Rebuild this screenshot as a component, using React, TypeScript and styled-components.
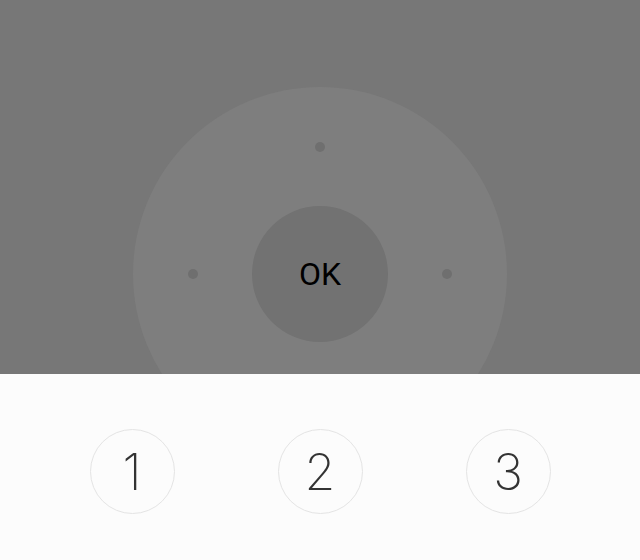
import { FC } from 'react';
import styled, { createGlobalStyle } from 'styled-components';

const GlobalStyle = createGlobalStyle`
  html, body {
    margin: 0;
    padding: 0;
    background: #fcfcfc;
  }
  * {
    box-sizing: border-box;
  }
`;

const Screen = styled.div`
  width: 640px;
  height: 560px;
  display: flex;
  flex-direction: column;
  overflow: hidden;
`;

const Pad = styled.div`
  height: 374px;
  flex: none;
  background: #777777;
  display: flex;
  justify-content: center;
  padding-top: 87px;
  overflow: hidden;
`;

const Wheel = styled.div`
  flex: none;
  width: 374px;
  height: 374px;
  border-radius: 50%;
  background: #7e7e7e;
  display: grid;
  grid-template-columns: 55px 10px 54px 136px 54px 10px 55px;
  grid-template-rows: 55px 10px 54px 136px 54px 10px 55px;
`;

const Dot = styled.span<{ $col: number; $row: number }>`
  grid-column: ${(p) => p.$col};
  grid-row: ${(p) => p.$row};
  place-self: center;
  width: 10px;
  height: 10px;
  border-radius: 50%;
  background: #6f6f6f;
`;

const OkButton = styled.button`
  grid-column: 4;
  grid-row: 4;
  width: 136px;
  height: 136px;
  border: none;
  border-radius: 50%;
  background: #727272;
  color: #000;
  font-family: 'Roboto', 'Liberation Sans', sans-serif;
  font-size: 32px;
  padding: 0;
  display: flex;
  align-items: center;
  justify-content: center;
`;

const Keys = styled.div`
  flex: 1;
  background: #fcfcfc;
  display: grid;
  grid-template-columns: repeat(3, 188px);
  justify-content: center;
  justify-items: center;
  padding-top: 55px;
  align-items: start;
`;

const Key = styled.button`
  width: 85px;
  height: 85px;
  border-radius: 50%;
  border: 1px solid #e4e4e4;
  background: transparent;
  color: #333;
  font-family: 'Inter', 'Roboto', sans-serif;
  font-weight: 200;
  font-size: 50px;
  padding: 0;
  display: flex;
  align-items: center;
  justify-content: center;
`;

const App: FC = () => {
  return (
    <Screen>
      <GlobalStyle />
      <Pad>
        <Wheel>
          <Dot $col={4} $row={2} />
          <Dot $col={2} $row={4} />
          <OkButton type="button">OK</OkButton>
          <Dot $col={6} $row={4} />
          <Dot $col={4} $row={6} />
        </Wheel>
      </Pad>
      <Keys>
        <Key type="button">1</Key>
        <Key type="button">2</Key>
        <Key type="button">3</Key>
      </Keys>
    </Screen>
  );
};

export default App;
